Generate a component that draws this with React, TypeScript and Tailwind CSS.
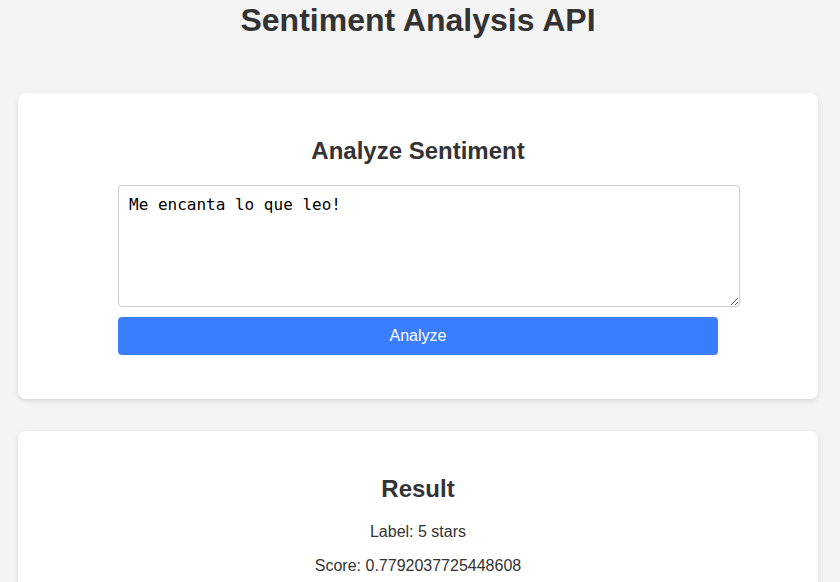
import React from 'react';

const App: React.FC = () => {
  const [text, setText] = React.useState('Me encanta lo que leo!');

  return (
    <div className="min-h-[582px] bg-[#f4f4f4] text-[#333] font-['Liberation_Sans',Arial,sans-serif] pt-[2px] pb-10">
      <h1 className="pr-[4px] text-center text-[32px] font-bold leading-[37px]">Sentiment Analysis API</h1>

      <div className="ml-[18px] mt-[54px] w-[800px] rounded-lg bg-white pt-[44px] pb-[44px] shadow-[0_2px_5px_rgba(0,0,0,0.12)]">
        <h2 className="text-center text-[24px] font-bold leading-[28px] mb-[20px]">Analyze Sentiment</h2>
        <div className="mx-auto w-[600px]">
          <textarea
            value={text}
            onChange={(e) => setText(e.target.value)}
            className="block w-[622px] h-[122px] rounded border border-[#ccc] bg-white p-[10px] font-['DejaVu_Sans_Mono',monospace] text-[16px] leading-[18.6px] text-black resize"
          />
          <button className="mt-[10px] block h-[38px] w-[600px] rounded bg-[#3a7dff] text-[16px] text-white">
            Analyze
          </button>
        </div>
      </div>

      <div className="ml-[18px] mt-[32px] w-[800px] rounded-lg bg-white pt-[44px] pb-[44px] shadow-[0_2px_5px_rgba(0,0,0,0.12)]">
        <h2 className="text-center text-[24px] font-bold leading-[28px] mb-[20px]">Result</h2>
        <p className="text-center text-[16px] leading-[18.4px]">Label: 5 stars</p>
        <p className="mt-[16px] text-center text-[16px] leading-[18.4px]">Score: 0.7792037725448608</p>
      </div>
    </div>
  );
};

export default App;
